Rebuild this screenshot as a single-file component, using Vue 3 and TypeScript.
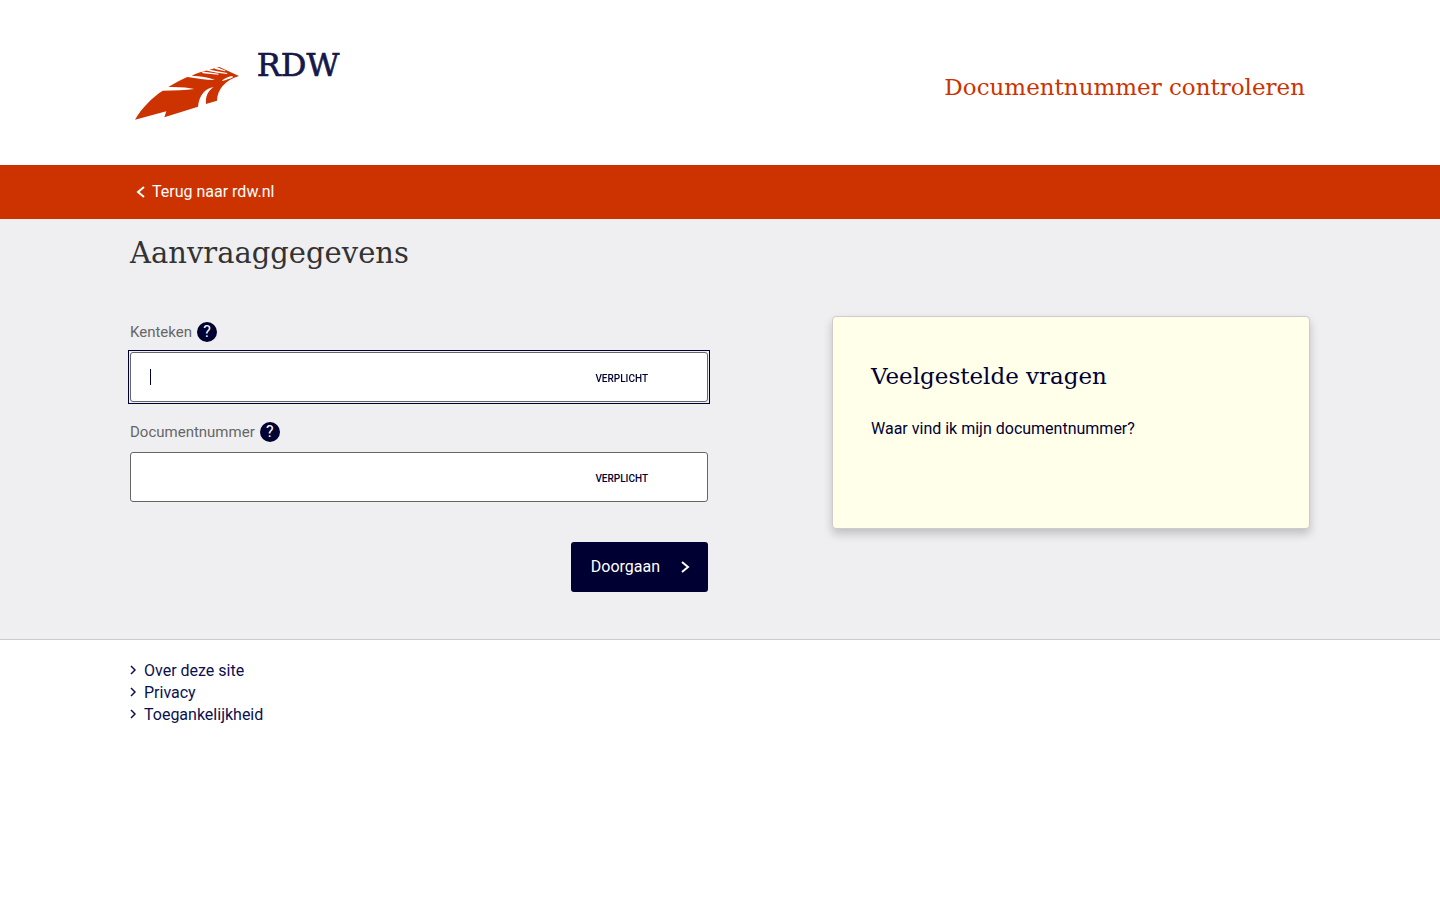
<script setup lang="ts">
import { onMounted, reactive, ref } from 'vue'

interface Field {
  id: string
  label: string
}

const fields: Field[] = [
  { id: 'kenteken', label: 'Kenteken' },
  { id: 'documentnummer', label: 'Documentnummer' },
]
const footerLinks: string[] = ['Over deze site', 'Privacy', 'Toegankelijkheid']

const values = reactive<Record<string, string>>({ kenteken: '', documentnummer: '' })
const active = ref('kenteken')

onMounted(() => {
  document.getElementById('kenteken')?.focus()
})
</script>

<template>
  <div class="page">
    <header class="container header">
      <a class="logo" href="#" aria-label="RDW">
        <svg width="230" height="90" viewBox="0 0 690 270" aria-hidden="true">
          <path
            fill="#cc3300"
            d="M30 239 C50 204 80 174 113 152 C150 151 182 151 208 147 C190 143 165 140 130 141 C152 128 170 118 187 111 C215 115 240 120 270 120 C250 112 228 108 200 107 C215 100 228 96 240 93 L283 81 L342 108 C300 121 277 148 276 182 L243 192 C241 169 249 152 266 142 C241 143 222 168 219 200 L118 232 L124 214 Z"
          />
          <path
            fill="#fff"
            d="M228 94 L281 101 L280 104 L234 100 Z M248 88 L277 94 L307 99 L306 102 L276 98 L246 92 Z M274 82 L282 84 L302 92 L300 94 L280 89 L268 86 Z M292 121 C300 114 312 109 322 108 L324 112 C314 117 303 120 292 123 Z"
          />
          <text class="wordmark" x="395" y="109">RDW</text>
        </svg>
      </a>
      <h1 class="title">Documentnummer controleren</h1>
    </header>

    <nav class="bar">
      <div class="container">
        <a class="back" href="#">
          <svg width="10" height="12" viewBox="0 0 10 12" aria-hidden="true">
            <path d="M8 1 L2 6 L8 11" fill="none" stroke="currentColor" stroke-width="2" />
          </svg>
          Terug naar rdw.nl
        </a>
      </div>
    </nav>

    <main class="main">
      <div class="container">
        <h2 class="heading">Aanvraaggegevens</h2>
        <div class="columns">
          <form @submit.prevent>
            <div v-for="field in fields" :key="field.id" class="field">
              <div class="label-row">
                <label :for="field.id">{{ field.label }}</label>
                <button class="help" type="button" :aria-label="'Uitleg ' + field.label">?</button>
              </div>
              <div class="control" :class="{ active: active === field.id }">
                <input
                  :id="field.id"
                  v-model="values[field.id]"
                  type="text"
                  required
                  @focus="active = field.id"
                />
                <span v-if="active === field.id && !values[field.id]" class="caret"></span>
                <span class="required">VERPLICHT</span>
              </div>
            </div>
            <div class="actions">
              <button class="submit" type="submit">
                Doorgaan
                <svg width="10" height="12" viewBox="0 0 10 12" aria-hidden="true">
                  <path d="M2 1 L8 6 L2 11" fill="none" stroke="currentColor" stroke-width="2" />
                </svg>
              </button>
            </div>
          </form>

          <aside class="faq">
            <h3>Veelgestelde vragen</h3>
            <a href="#">Waar vind ik mijn documentnummer?</a>
          </aside>
        </div>
      </div>
    </main>

    <footer class="container">
      <ul class="links">
        <li v-for="link in footerLinks" :key="link">
          <svg width="6" height="12" viewBox="0 0 6 12" aria-hidden="true">
            <path d="M1 1 L5 5 L1 9" fill="none" stroke="currentColor" stroke-width="1.5" />
          </svg>
          <a href="#">{{ link }}</a>
        </li>
      </ul>
    </footer>
  </div>
</template>

<style>
body {
  margin: 0;
  background: #fff;
}
</style>

<style scoped>
.page {
  font: 16px/22px Roboto, 'Liberation Sans', sans-serif;
  color: #000033;
}
.page *,
.page *::before {
  box-sizing: border-box;
}
a {
  color: inherit;
  text-decoration: none;
}
.container {
  max-width: 1190px;
  margin: 0 auto;
  padding: 0 5px;
}
.header {
  display: flex;
  justify-content: space-between;
  align-items: center;
  height: 165px;
  padding-right: 10px;
  padding-left: 0;
}
.logo {
  padding-top: 4px;
}
.logo svg {
  display: block;
}
.wordmark {
  font-family: 'Roboto Slab', 'DejaVu Serif', serif;
  font-size: 96px;
  fill: #14184a;
  stroke: #14184a;
  stroke-width: 2px;
}
.title,
.heading,
.faq h3 {
  margin: 0;
  font-family: 'Roboto Slab', 'DejaVu Serif', serif;
  font-weight: 400;
}
.title {
  padding-top: 8px;
  font-size: 23px;
  line-height: 32px;
  color: #cc3300;
}
.bar {
  background: #cc3300;
  color: #fff;
}
.back {
  display: inline-flex;
  align-items: center;
  gap: 6px;
  height: 54px;
  padding-left: 6px;
}
.main {
  padding-bottom: 47px;
  border-bottom: 1px solid #cccccc;
  background: #efeff1;
}
.heading {
  padding: 14px 0 43px;
  font-size: 29px;
  line-height: 40px;
  color: #333333;
}
.columns {
  display: grid;
  grid-template-columns: 578fr 478fr;
  column-gap: 124px;
  align-items: start;
}
.field {
  padding-bottom: 14px;
}
.label-row {
  display: flex;
  align-items: center;
  gap: 5px;
  height: 36px;
  padding-bottom: 4px;
  font-size: 15px;
  color: #666666;
}
.help {
  width: 20px;
  height: 20px;
  padding: 0;
  border: 0;
  border-radius: 50%;
  background: #000033;
  color: #fff;
  font: 16px/20px Roboto, sans-serif;
}
.control {
  position: relative;
  display: flex;
}
.control input {
  flex: 1;
  width: 100%;
  height: 50px;
  padding: 0 19px;
  border: 1px solid #666666;
  border-radius: 3px;
  outline: 0;
  background: #fff;
  color: #000033;
  font: 16px/22px Roboto, sans-serif;
}
.active::before {
  content: '';
  position: absolute;
  inset: -2px;
  border: 1px solid #000033;
}
.active input {
  position: relative;
}
.active input:invalid {
  caret-color: transparent;
}
.caret {
  position: absolute;
  top: 17px;
  left: 20px;
  width: 1px;
  height: 16px;
  background: #000033;
}
.required {
  position: absolute;
  top: 16px;
  right: 60px;
  font-size: 10px;
  font-weight: 500;
}
.actions {
  display: flex;
  justify-content: flex-end;
  padding-top: 26px;
}
.submit {
  display: flex;
  align-items: center;
  gap: 20px;
  height: 50px;
  padding: 0 18px 0 20px;
  border: 0;
  border-radius: 3px;
  background: #000033;
  color: #fff;
  font: 16px/22px Roboto, sans-serif;
}
.faq {
  min-height: 213px;
  padding: 38px;
  border: 1px solid #cccccc;
  border-radius: 4px;
  background: #ffffea;
  box-shadow: 0 5px 10px rgba(0, 0, 0, 0.2);
}
.faq h3 {
  padding-bottom: 21px;
  font-size: 23px;
  line-height: 42px;
}
.links {
  margin: 0;
  padding: 20px 0;
  list-style: none;
  color: #0a0f50;
}
.links li {
  display: flex;
  align-items: center;
  gap: 8px;
}
</style>
